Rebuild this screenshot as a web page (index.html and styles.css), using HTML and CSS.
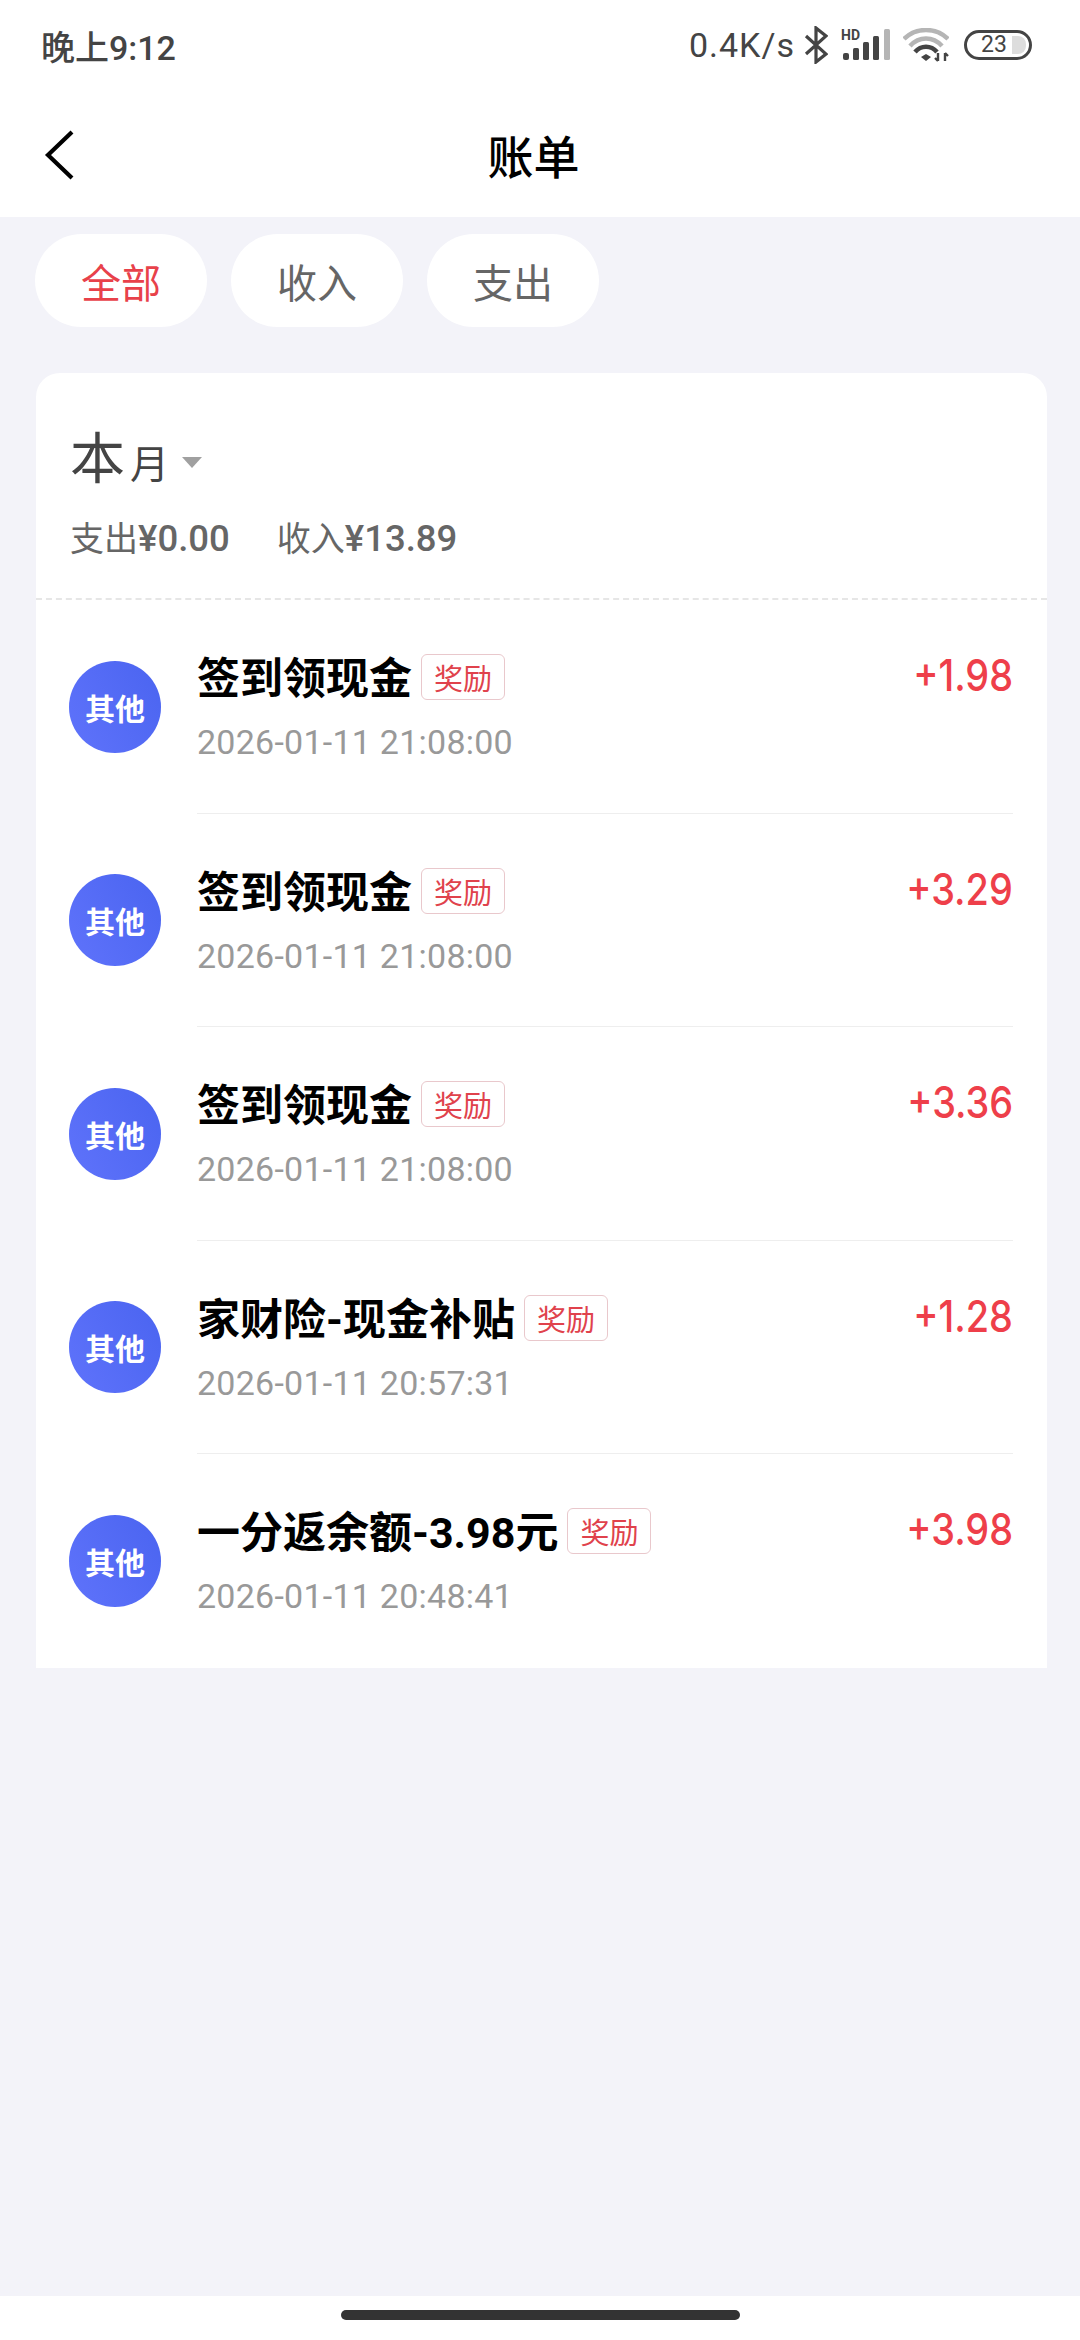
FILE: index.html
```html
<!DOCTYPE html>
<html>
<head>
  <title>账单</title>
  <link rel="stylesheet" href="styles.css">
</head>
<body>
  <div class="top">
    <div class="status">
      <span class="time">晚上9:12</span>
      <div class="status-right">
        <span class="speed">0.4K/s</span>
        <svg class="bt" width="24" height="38" viewBox="0 0 24 38"><path d="M2 10 L22 28 L12 36 V2 L22 10 L2 28" fill="none" stroke="#444" stroke-width="3.2"/></svg>
        <svg class="signal" width="50" height="34" viewBox="0 0 50 34">
          <text x="0" y="12" class="hd">HD</text>
          <rect x="2" y="25" width="6" height="7" rx="2" fill="#444"/>
          <rect x="12" y="20" width="6" height="12" rx="1.5" fill="#444"/>
          <rect x="22" y="14" width="6" height="18" rx="1.5" fill="#444"/>
          <rect x="32" y="8" width="6" height="24" rx="1.5" fill="#444"/>
          <rect x="43" y="1" width="6" height="31" rx="1.5" fill="#b5b5b5"/>
        </svg>
        <svg class="wifi" width="46" height="34" viewBox="0 0 46 34">
          <path d="M1 11 C13 -1 33 -1 45 11" fill="none" stroke="#b5b5b5" stroke-width="4.5"/>
          <path d="M7 18 C16 8 30 8 39 18" fill="none" stroke="#b5b5b5" stroke-width="4.5"/>
          <path d="M12 24 C18 17 28 17 34 24" fill="none" stroke="#444" stroke-width="4.5"/>
          <path d="M18 29 L23 26 L28 29 L23 33 Z" fill="#444"/>
          <path d="M35 25 V33 M32 30 L35 33 M42 33 V25 M42 25 L45 28" fill="none" stroke="#444" stroke-width="2.4"/>
        </svg>
        <div class="battery"><span class="battery-num">23</span><span class="battery-rest"></span></div>
      </div>
    </div>
    <div class="nav">
      <svg class="back" width="32" height="52" viewBox="0 0 32 52"><path d="M28 3 L4 26 L28 49" fill="none" stroke="#000" stroke-width="4.2"/></svg>
      <span class="nav-title">账单</span>
    </div>
  </div>

  <div class="tabs">
    <div class="tab active">全部</div>
    <div class="tab">收入</div>
    <div class="tab">支出</div>
  </div>

  <div class="card">
    <div class="summary">
      <div class="month"><span class="month-big">本</span><span class="month-small">月</span><span class="caret"></span></div>
      <div class="totals">
        <span>支出<b>¥0.00</b></span>
        <span>收入<b>¥13.89</b></span>
      </div>
    </div>

    <div class="row">
      <div class="avatar">其他</div>
      <div class="row-body">
        <div class="row-main">
          <div class="row-title"><span class="name">签到领现金</span><span class="tag">奖励</span></div>
          <div class="date">2026-01-11 21:08:00</div>
        </div>
        <div class="amount">+1.98</div>
      </div>
    </div>
    <div class="row">
      <div class="avatar">其他</div>
      <div class="row-body">
        <div class="row-main">
          <div class="row-title"><span class="name">签到领现金</span><span class="tag">奖励</span></div>
          <div class="date">2026-01-11 21:08:00</div>
        </div>
        <div class="amount">+3.29</div>
      </div>
    </div>
    <div class="row">
      <div class="avatar">其他</div>
      <div class="row-body">
        <div class="row-main">
          <div class="row-title"><span class="name">签到领现金</span><span class="tag">奖励</span></div>
          <div class="date">2026-01-11 21:08:00</div>
        </div>
        <div class="amount">+3.36</div>
      </div>
    </div>
    <div class="row">
      <div class="avatar">其他</div>
      <div class="row-body">
        <div class="row-main">
          <div class="row-title"><span class="name">家财险-现金补贴</span><span class="tag">奖励</span></div>
          <div class="date">2026-01-11 20:57:31</div>
        </div>
        <div class="amount">+1.28</div>
      </div>
    </div>
    <div class="row">
      <div class="avatar">其他</div>
      <div class="row-body">
        <div class="row-main">
          <div class="row-title"><span class="name">一分返余额-3.98元</span><span class="tag">奖励</span></div>
          <div class="date">2026-01-11 20:48:41</div>
        </div>
        <div class="amount">+3.98</div>
      </div>
    </div>
  </div>

  <div class="home-bar"><div class="home-pill"></div></div>
</body>
</html>
```
FILE: styles.css
```css
* {
  box-sizing: border-box;
}

body {
  margin: 0;
  width: 1080px;
  height: 2340px;
  display: flex;
  flex-direction: column;
  background-color: #f3f3f9;
  font-family: Roboto, "Noto Sans CJK SC", sans-serif;
}

.top {
  height: 217px;
  background-color: #fff;
}

.status {
  height: 90px;
  padding: 0 48px 0 41px;
  display: flex;
  justify-content: space-between;
  align-items: center;
  color: #444;
}

.time {
  font-size: 34px;
  font-weight: 500;
}

.status-right {
  display: flex;
  align-items: center;
}

.speed {
  font-size: 34px;
  letter-spacing: 1px;
}

.bt {
  margin-left: 9px;
}

.signal {
  margin-left: 13px;
}

.hd {
  font-family: Roboto, sans-serif;
  font-size: 14px;
  font-weight: 700;
  fill: #444;
}

.wifi {
  margin-left: 12px;
}

.battery {
  width: 68px;
  height: 30px;
  margin-left: 15px;
  padding-left: 14px;
  border: 3px solid #444;
  border-radius: 15px;
  display: flex;
  align-items: center;
  overflow: hidden;
}

.battery-num {
  font-size: 23px;
  line-height: 24px;
}

.battery-rest {
  width: 14px;
  height: 18px;
  margin-left: 5px;
  background-color: #ddd;
  border-radius: 0 8px 8px 0;
}

.nav {
  height: 127px;
  padding: 0 0 0 44px;
  position: relative;
  display: flex;
  align-items: center;
}

.back {
  margin-top: 3px;
}

.nav-title {
  position: absolute;
  left: 0;
  right: 13px;
  top: 38px;
  text-align: center;
  font-size: 46px;
  line-height: 60px;
  font-weight: 500;
  color: #000;
}

.tabs {
  padding: 17px 35px 0;
  display: flex;
  gap: 24px;
}

.tab {
  width: 172px;
  height: 93px;
  border-radius: 47px;
  background-color: #fff;
  color: #666;
  font-size: 40px;
  display: flex;
  align-items: center;
  justify-content: center;
}

.tab.active {
  color: #e8414a;
}

.card {
  margin: 46px 33px 0 36px;
  background-color: #fff;
  border-radius: 24px 24px 0 0;
}

.summary {
  height: 227px;
  padding: 50px 34px 0;
  border-bottom: 2px dashed #e6e6e6;
}

.month {
  display: flex;
  align-items: baseline;
  color: #444;
}

.month-big {
  font-size: 55px;
  line-height: 72px;
}

.month-small {
  font-size: 39px;
  margin-left: 5px;
}

.caret {
  width: 0;
  height: 0;
  margin: 6px 0 0 13px;
  border-left: 10px solid transparent;
  border-right: 10px solid transparent;
  border-top: 11px solid #a0a0a0;
  align-self: center;
}

.totals {
  margin-top: 20px;
  display: flex;
  gap: 47px;
  font-size: 34px;
  line-height: 48px;
  color: #666;
}

.totals b {
  font-weight: 500;
  font-size: 36.5px;
}

.row {
  height: 213.5px;
  padding-left: 33px;
  display: flex;
  align-items: center;
}

.avatar {
  width: 92px;
  height: 92px;
  flex: none;
  border-radius: 50%;
  background: linear-gradient(60deg, #5f73fb, #4a64f0);
  color: #fff;
  font-size: 30px;
  font-weight: 700;
  display: flex;
  align-items: center;
  justify-content: center;
}

.row-body {
  flex: 1;
  height: 100%;
  margin-left: 36px;
  margin-right: 34px;
  padding-top: 51px;
  display: flex;
  justify-content: space-between;
  align-items: flex-start;
  border-bottom: 1px solid #eee;
}

.row:last-child .row-body {
  border-bottom: none;
}

.row-title {
  display: flex;
  align-items: center;
  height: 56px;
}

.name {
  font-size: 43px;
  line-height: 56px;
  font-weight: 700;
  color: #000;
}

.tag {
  width: 84px;
  height: 46px;
  margin-left: 9px;
  margin-top: -4px;
  border: 1px solid #e9c8cc;
  border-radius: 6px;
  color: #e0424c;
  font-size: 29px;
  display: flex;
  align-items: center;
  justify-content: center;
}

.date {
  margin-top: 15px;
  font-size: 34px;
  letter-spacing: 0.25px;
  line-height: 40px;
  color: #999;
}

.amount {
  font-family: Inter, Roboto, sans-serif;
  font-size: 44px;
  font-weight: 500;
  line-height: 48px;
  color: #ee3f4a;
  transform: scaleX(0.86);
  transform-origin: right center;
}

.home-bar {
  margin-top: auto;
  height: 44px;
  padding-top: 14px;
  background-color: #fff;
  display: flex;
  align-items: flex-start;
  justify-content: center;
}

.home-pill {
  width: 399px;
  height: 10px;
  border-radius: 5px;
  background-color: #333;
}
```
